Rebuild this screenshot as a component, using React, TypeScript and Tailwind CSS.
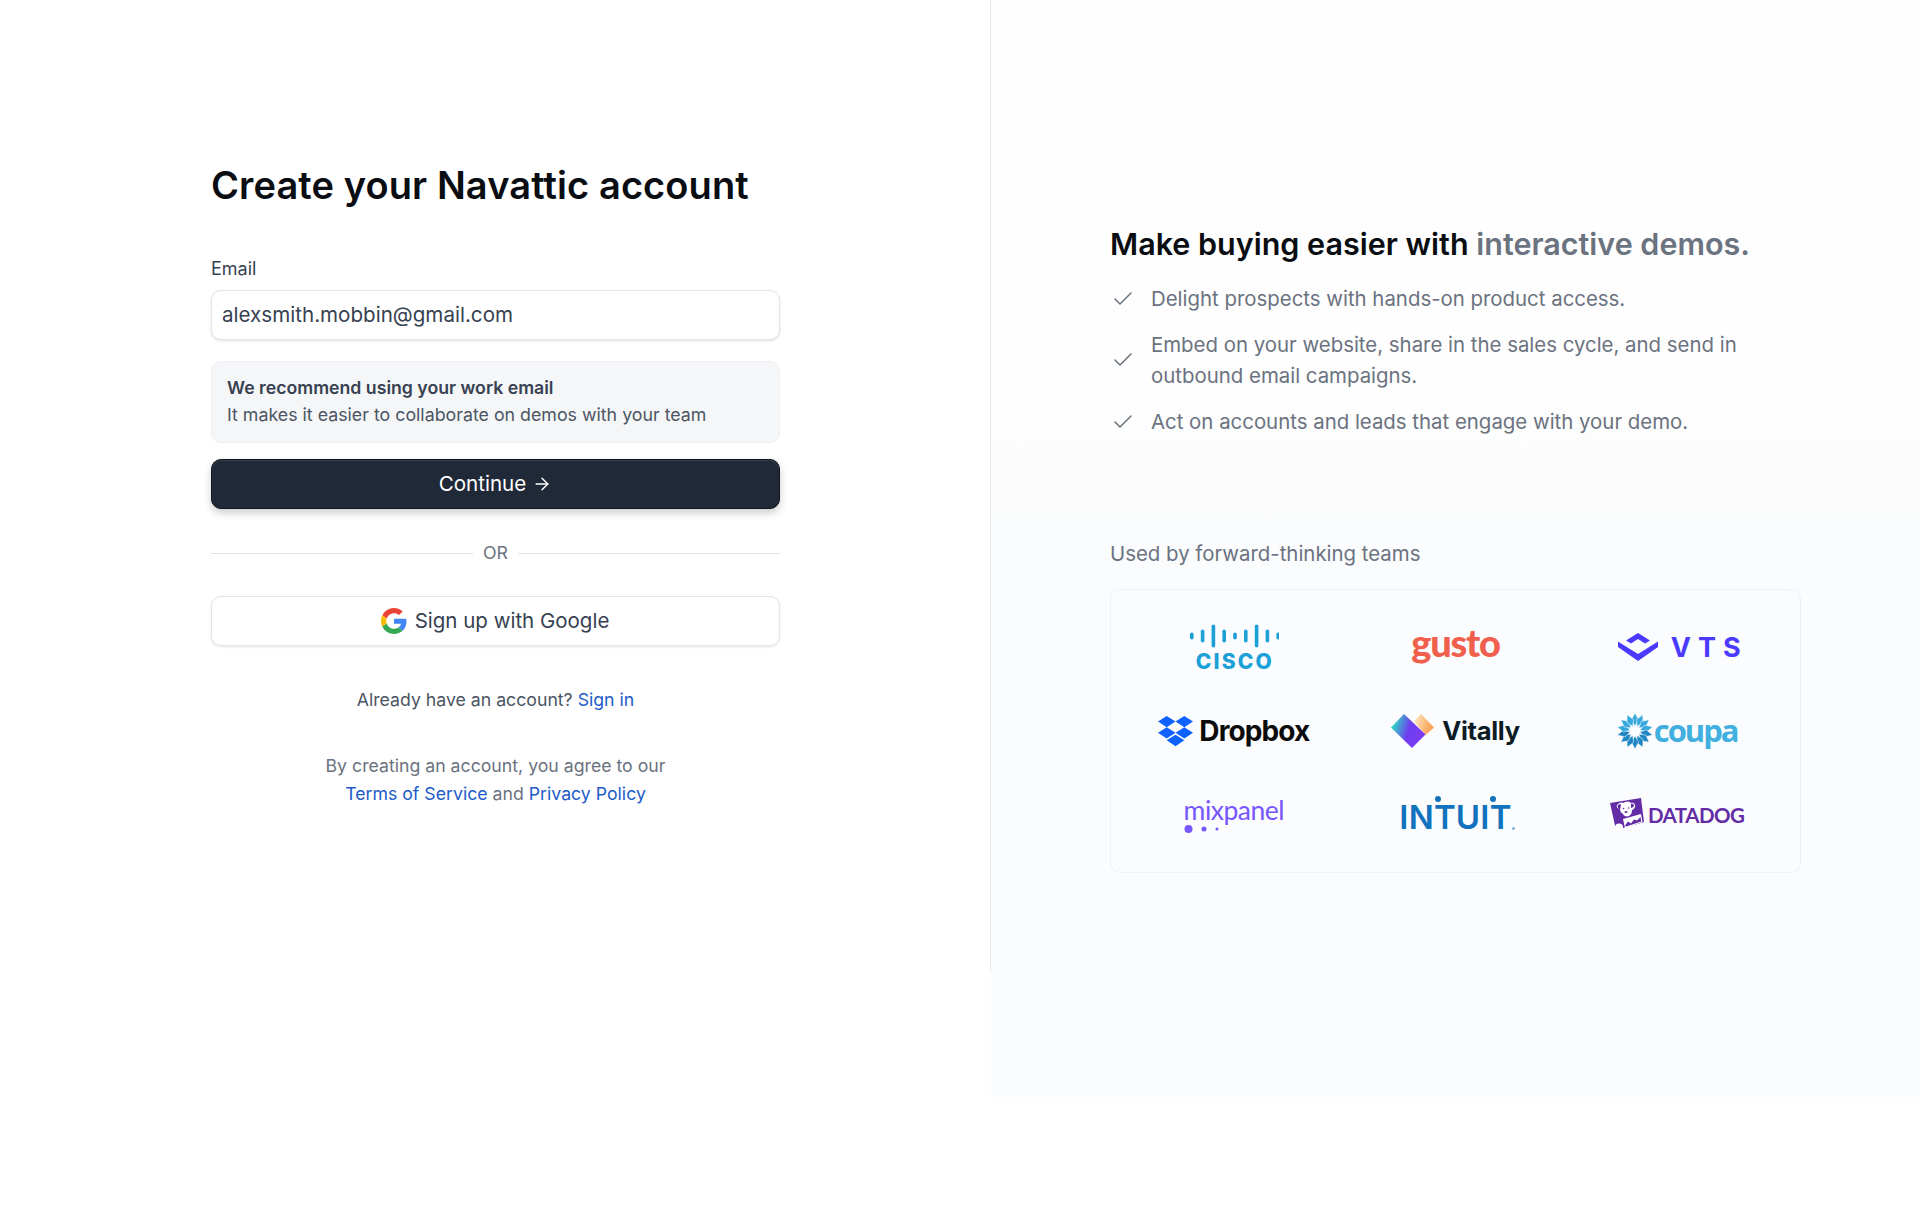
import React from "react";
import { Check, ArrowRight } from "lucide-react";

const GoogleG = () => (
  <svg width="26" height="26" viewBox="0 0 48 48" className="shrink-0">
    <path fill="#EA4335" d="M24 9.5c3.54 0 6.71 1.22 9.21 3.6l6.85-6.85C35.9 2.38 30.47 0 24 0 14.62 0 6.51 5.38 2.56 13.22l7.98 6.19C12.43 13.72 17.74 9.5 24 9.5z" />
    <path fill="#4285F4" d="M46.98 24.55c0-1.57-.15-3.09-.38-4.55H24v9.02h12.94c-.58 2.96-2.26 5.48-4.78 7.18l7.73 6c4.51-4.18 7.09-10.36 7.09-17.65z" />
    <path fill="#FBBC05" d="M10.53 28.59c-.48-1.45-.76-2.99-.76-4.59s.27-3.14.76-4.59l-7.98-6.19C.92 16.46 0 20.12 0 24c0 3.88.92 7.54 2.56 10.78l7.97-6.19z" />
    <path fill="#34A853" d="M24 48c6.48 0 11.93-2.13 15.89-5.81l-7.73-6c-2.15 1.45-4.92 2.3-8.16 2.3-6.26 0-11.57-4.22-13.47-9.91l-7.98 6.19C6.51 42.62 14.62 48 24 48z" />
  </svg>
);

const Cisco = () => (
  <div className="flex flex-col items-center">
    <svg width="90" height="24" viewBox="0 0 90 24">
      {[7, 13, 23, 13, 7, 13, 23, 13, 7].map((full, i) => (
        <rect key={i} x={1 + i * 10.8} y={12 - full / 2} width="3.6" height={full} rx="1.8" fill="#1ba0d7" />
      ))}
    </svg>
    <span className="mt-[5px] pl-[2px] text-[21px] leading-[17px] font-extrabold tracking-[2.2px] text-[#1ba0d7] font-['Inter',sans-serif]">CISCO</span>
  </div>
);

const Dropbox = () => (
  <div className="flex items-center gap-[6px]">
    <svg width="35" height="31" viewBox="0 0 35 31" fill="#0f62fe">
      <path d="M8.7 0 0 5.6l8.7 5.6 8.8-5.6zM26.3 0l-8.8 5.6 8.8 5.6L35 5.6zM0 16.8l8.7 5.6 8.8-5.6-8.8-5.6zM26.3 11.2l-8.8 5.6 8.8 5.6 8.7-5.6zM8.7 24.3l8.8 5.9 8.800-5.9-8.800-5.600z" />
    </svg>
    <span className="text-[28px] leading-none font-bold tracking-[-0.9px] text-[#0b0b0b] font-['Inter',sans-serif]">Dropbox</span>
  </div>
);

const Mixpanel = () => (
  <div className="flex flex-col items-start">
    <span className="text-[26.500px] leading-[26px] font-normal tracking-[-0.5px] text-[#7856ff] font-['Lato',sans-serif]">mixpanel</span>
    <svg width="40" height="10" viewBox="0 0 40 10" className="mt-[1px]">
      <circle cx="4.5" cy="5" r="4" fill="#7856ff" />
      <circle cx="20" cy="5" r="2.5" fill="#7856ff" />
      <circle cx="33" cy="5" r="1.5" fill="#7856ff" />
    </svg>
  </div>
);

const Gusto = () => (
  <span className="text-[38px] leading-none font-black tracking-[-1.2px] text-[#f0604d] font-['Lato',sans-serif] -translate-y-[5px]">gusto</span>
);

const Vitally = () => (
  <div className="flex items-center gap-[8px]">
    <svg width="43" height="34" viewBox="0 0 43 34">
      <defs>
        <linearGradient id="vg" x1="0" y1="0" x2="1" y2="0.3">
          <stop offset="0.15" stopColor="#2fd3c3" />
          <stop offset="0.6" stopColor="#6f3df0" />
          <stop offset="1" stopColor="#7a3cf2" />
        </linearGradient>
        <linearGradient id="vo" x1="0" y1="0.2" x2="1" y2="0.6">
          <stop offset="0" stopColor="#fde6c2" />
          <stop offset="1" stopColor="#fb9a4a" />
        </linearGradient>
      </defs>
      <path d="M23 7.500 30 0 43 13.500 34.500 21z" fill="url(#vo)" />
      <path d="M13 0 34.500 20.500 21 34 0 13.500z" fill="url(#vg)" />
    </svg>
    <span className="text-[25.500px] leading-none font-bold tracking-[-0.3px] text-[#0c1b24] font-['Inter',sans-serif]">Vitally</span>
  </div>
);

const Intuit = () => (
  <span className="relative text-[33px] leading-none font-semibold tracking-[0.2px] text-[#1272bd] font-['Inter',sans-serif] translate-y-[2px]">
    INTUIT
    <span className="absolute left-[36px] -top-[5px] w-[6px] h-[6px] rounded-full bg-[#1272bd]" />
    <span className="absolute left-[91px] -top-[5px] w-[6px] h-[6px] rounded-full bg-[#1272bd]" />
    <span className="absolute -right-[3px] bottom-[4px] w-[3px] h-[3px] rounded-full bg-[#7fb2dc]" />
  </span>
);

const VTS = () => (
  <div className="flex items-center gap-[13px] translate-x-[2px]">
    <svg width="40" height="28" viewBox="0 0 40 28" fill="#4a3aff">
      <path d="M0 8.500 20 21 40 8.500V14L20 28 0 14z" />
      <path d="M20 0 32 7.500 27 10.500 20 6 13 10.500 8 7.500z" />
    </svg>
    <span className="text-[27px] leading-none font-bold tracking-[7px] -mr-[7px] text-[#4a3aff] font-['Inter',sans-serif]">VTS</span>
  </div>
);

const Coupa = () => (
  <div className="flex items-center gap-[1px]">
    <svg width="36" height="36" viewBox="-18 -18 36 36">
      {Array.from({ length: 14 }).map((_, i) => (
        <path
          key={i}
          d="M0 -5 L3.600 -11 L0 -18 L-3.600 -11 Z"
          fill={i >= 4 && i <= 10 ? "#1f86c4" : "#35a8dc"}
          stroke="#fbfcfd"
          strokeWidth="0.5"
          transform={`rotate(${(i * 360) / 14})`}
        />
      ))}
    </svg>
    <span className="text-[31px] leading-none font-bold tracking-[-2px] text-[#41b0e0] font-['Open_Sans',sans-serif] -translate-y-[1px]">coupa</span>
  </div>
);

const Datadog = () => (
  <div className="flex items-center gap-[4px]">
    <svg width="34" height="34" viewBox="0 0 34 34">
      <path d="M0 5 31 0 34 24 6 32z" fill="#632ca6" />
      <path d="M7 7c2-2 4-3 6-2 3-2 6-2 8 0 2-1 5 1 4 4-1 2-2 3-3 3 0 3-1 5-3 6-3 1-5 0-6-2-2-1-3-3-3-5-2 0-4-2-3-4z" fill="#fff" />
      <path d="M8 7c1-1 3-1 3 0l-1 5c-1 0-3-3-2-5zM21 6c1-1 3 0 3 2-1 1-2 2-3 2z" fill="#632ca6" />
      <circle cx="13.500" cy="10.500" r="0.800" fill="#632ca6" />
      <circle cx="18.500" cy="10" r="0.800" fill="#632ca6" />
      <ellipse cx="16" cy="14" rx="1.500" ry="1" fill="#632ca6" />
      <path d="M13 21 31 16 32.500 24 15 30z" fill="#fff" />
      <path d="M15 27.500l3-4 3 2 3-4 3 1 3.500-3.500.7 4.500-15 5z" fill="#632ca6" />
      <circle cx="9" cy="29.500" r="4" fill="#fff" />
    </svg>
    <span className="text-[20.500px] leading-none font-bold tracking-[-0.5px] text-[#632ca6] font-['Lato',sans-serif]">DATADOG</span>
  </div>
);

const points = [
  "Delight prospects with hands-on product access.",
  "Embed on your website, share in the sales cycle, and send in outbound email campaigns.",
  "Act on accounts and leads that engage with your demo.",
];

export default function App() {
  return (
    <div className="flex items-start w-full h-[1205px] bg-white font-['Inter',sans-serif] overflow-hidden">
      <div className="w-[991px] h-[972px] shrink-0 border-r border-[#e5e7eb] pl-[211px] pt-[161px]">
        <div className="w-[569px]">
          <h1 className="text-[38px] leading-[48px] font-semibold tracking-[0.1px] text-[#0a0d12] whitespace-nowrap">Create your Navattic account</h1>
          <label className="block mt-[48px] text-[18px] leading-[24px] font-normal text-[#374151]">Email</label>
          <div className="mt-[9px] h-[50px] rounded-[10px] border border-[#e3e5e9] bg-white shadow-sm px-[10px] flex items-center text-[20.600px] text-[#374151]">alexsmith.mobbin@gmail.com</div>
          <div className="mt-[21px] h-[82px] rounded-[10px] border border-[#eceef1] bg-[#f5f6f8] px-[15px] pb-[2px] flex flex-col justify-center">
            <p className="text-[17.700px] leading-[27px] font-semibold text-[#374151]">We recommend using your work email</p>
            <p className="text-[17.800px] leading-[27px] text-[#4b5563]">It makes it easier to collaborate on demos with your team</p>
          </div>
          <button className="mt-[16px] w-full h-[50px] rounded-[10px] bg-[#1f2937] border border-[#0f151e] shadow-[0_4px_8px_rgba(0,0,0,0.2),inset_0_1px_1px_rgba(255,255,255,0.12)] flex items-center justify-center gap-[6px] text-white text-[20.600px]">
            Continue <ArrowRight size={20} strokeWidth={1.75} />
          </button>
          <div className="mt-[32px] flex items-center gap-[10px]">
            <div className="flex-1 h-px bg-[#e0e2e6]" />
            <span className="text-[17.800px] leading-[24px] text-[#6b7280]">OR</span>
            <div className="flex-1 h-px bg-[#e0e2e6]" />
          </div>
          <button className="mt-[31px] w-full h-[50px] rounded-[10px] bg-white border border-[#e3e5e9] shadow-[0_1px_3px_rgba(0,0,0,0.1)] flex items-center justify-center gap-[9px] text-[#374151] text-[20.500px]">
            <GoogleG /> <span className="-translate-x-[1px]">Sign up with Google</span>
          </button>
          <p className="mt-[40px] text-center text-[17.700px] leading-[28px] text-[#4b5563]">
            Already have an account? <a className="text-[#1d5bc8]">Sign in</a>
          </p>
          <p className="mt-[38px] text-center text-[17.700px] leading-[28px] text-[#6b7280]">
            By creating an account, you agree to our
            <br />
            <a className="text-[#1d5bc8]">Terms of Service</a> and <a className="text-[#1d5bc8]">Privacy Policy</a>
          </p>
        </div>
      </div>
      <div className="flex-1 h-[1097px] bg-linear-to-b from-[#fefefe] from-[32%] to-[#fbfcfd] to-[48%] pl-[119px] pr-[119px] pt-[222px]">
        <h2 className="text-[30.500px] leading-[44px] font-semibold text-[#0a0d12] whitespace-nowrap">
          Make buying easier with <span className="text-[#6b7280]">interactive demos.</span>
        </h2>
        <ul className="mt-[17px] flex flex-col gap-[15px]">
          {points.map((t) => (
            <li key={t} className="flex items-center gap-[17px]">
              <Check size={24} strokeWidth={1.5} className="text-[#6b7280] shrink-0 translate-x-[1px]" />
              <span className="text-[20.400px] leading-[31px] text-[#6b7280]">{t}</span>
            </li>
          ))}
        </ul>
        <p className="mt-[101px] text-[20.400px] leading-[32px] text-[#6b7280]">Used by forward-thinking teams</p>
        <div className="mt-[19px] w-[691px] h-[284px] rounded-[10px] border border-[#eff1f3] px-[12px] py-[15px] grid grid-cols-3 grid-rows-3">
          {[Cisco, Gusto, VTS, Dropbox, Vitally, Coupa, Mixpanel, Intuit, Datadog].map((L, i) => (
            <div key={i} className="flex items-center justify-center">
              <L />
            </div>
          ))}
        </div>
      </div>
    </div>
  );
}
